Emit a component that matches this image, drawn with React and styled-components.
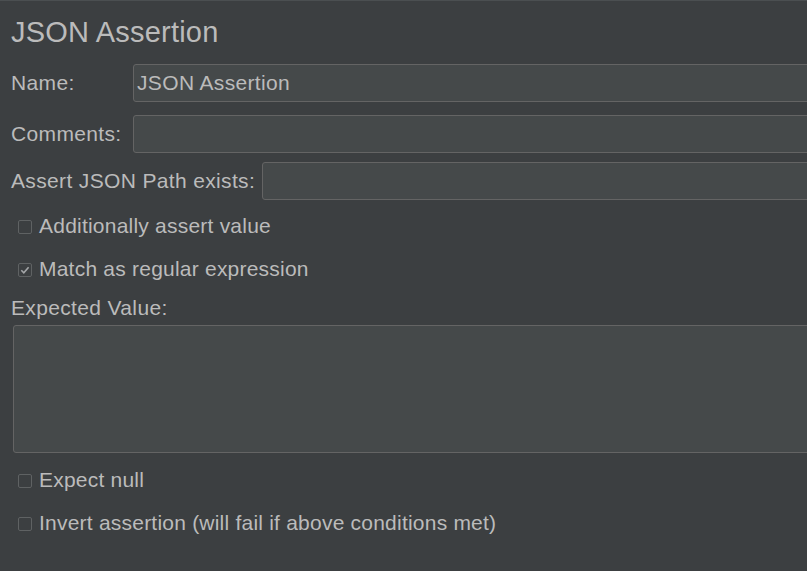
import React from 'react';
import styled, {createGlobalStyle} from 'styled-components';

const GlobalStyle = createGlobalStyle`
  html, body {
    margin: 0;
    padding: 0;
    background: #3c3f41;
    overflow: hidden;
  }
`;

const Panel = styled.div`
  width: calc(100% + 24px);
  height: 571px;
  box-sizing: border-box;
  border-top: 1px solid #4b4f51;
  padding: 13px 0 0 11px;
  background: #3c3f41;
  color: #bbbbbb;
  font-family: 'Liberation Sans', Arial, sans-serif;
  font-size: 21px;
  letter-spacing: 0.35px;
`;

const Title = styled.div`
  font-size: 29px;
  line-height: 36px;
  letter-spacing: 0.2px;
  height: 36px;
  margin-bottom: 14px;
`;

const FieldGrid = styled.div`
  display: grid;
  grid-template-columns: 111px 1fr;
  column-gap: 11px;
  row-gap: 13px;
`;

const Label = styled.label`
  line-height: 38px;
  white-space: nowrap;
`;

const Input = styled.div`
  height: 38px;
  box-sizing: border-box;
  border: 1px solid #646464;
  border-radius: 3px;
  background: #45494a;
  padding: 0 3px;
  line-height: 36px;
  white-space: nowrap;
  overflow: hidden;
`;

const InlineRow = styled.div`
  display: flex;
  align-items: center;
  gap: 7px;
  margin-top: 9px;
  & > ${Input} {
    flex: 1;
  }
`;

const CheckRow = styled.div`
  display: flex;
  align-items: center;
  gap: 7px;
  height: 38px;
  margin-left: 7px;
  margin-top: ${(p) => p.$gap}px;
  white-space: nowrap;
  letter-spacing: 0.22px;
`;

const Box = styled.span`
  display: inline-flex;
  width: 14px;
  height: 14px;
  flex: none;
  margin-top: 1px;
`;

const SectionLabel = styled.div`
  line-height: 26px;
  margin-top: 7px;
`;

const TextArea = styled.div`
  height: 128px;
  box-sizing: border-box;
  margin: 4px 0 0 2px;
  border: 1px solid #646464;
  border-radius: 3px;
  background: #45494a;
`;

function Checkbox({checked, label, gap}) {
  return (
    <CheckRow $gap={gap}>
      <Box>
        <svg width="14" height="14" viewBox="0 0 14 14">
          <rect x="0.5" y="0.5" width="13" height="13" rx="1.5" fill="#3c3f41" stroke="#5f6263" />
          {checked && (
            <path d="M3.3 7.3 L5.8 9.8 L10.6 4.2" fill="none" stroke="#a4a6a8" strokeWidth="1.6" />
          )}
        </svg>
      </Box>
      <span>{label}</span>
    </CheckRow>
  );
}

export default function App() {
  return (
    <>
      <GlobalStyle />
      <Panel>
        <Title>JSON Assertion</Title>
        <FieldGrid>
          <Label>Name:</Label>
          <Input>JSON Assertion</Input>
          <Label>Comments:</Label>
          <Input />
        </FieldGrid>
        <InlineRow>
          <Label>Assert JSON Path exists:</Label>
          <Input />
        </InlineRow>
        <Checkbox label="Additionally assert value" gap={7} />
        <Checkbox checked label="Match as regular expression" gap={5} />
        <SectionLabel>Expected Value:</SectionLabel>
        <TextArea />
        <Checkbox label="Expect null" gap={8} />
        <Checkbox label="Invert assertion (will fail if above conditions met)" gap={5} />
      </Panel>
    </>
  );
}
